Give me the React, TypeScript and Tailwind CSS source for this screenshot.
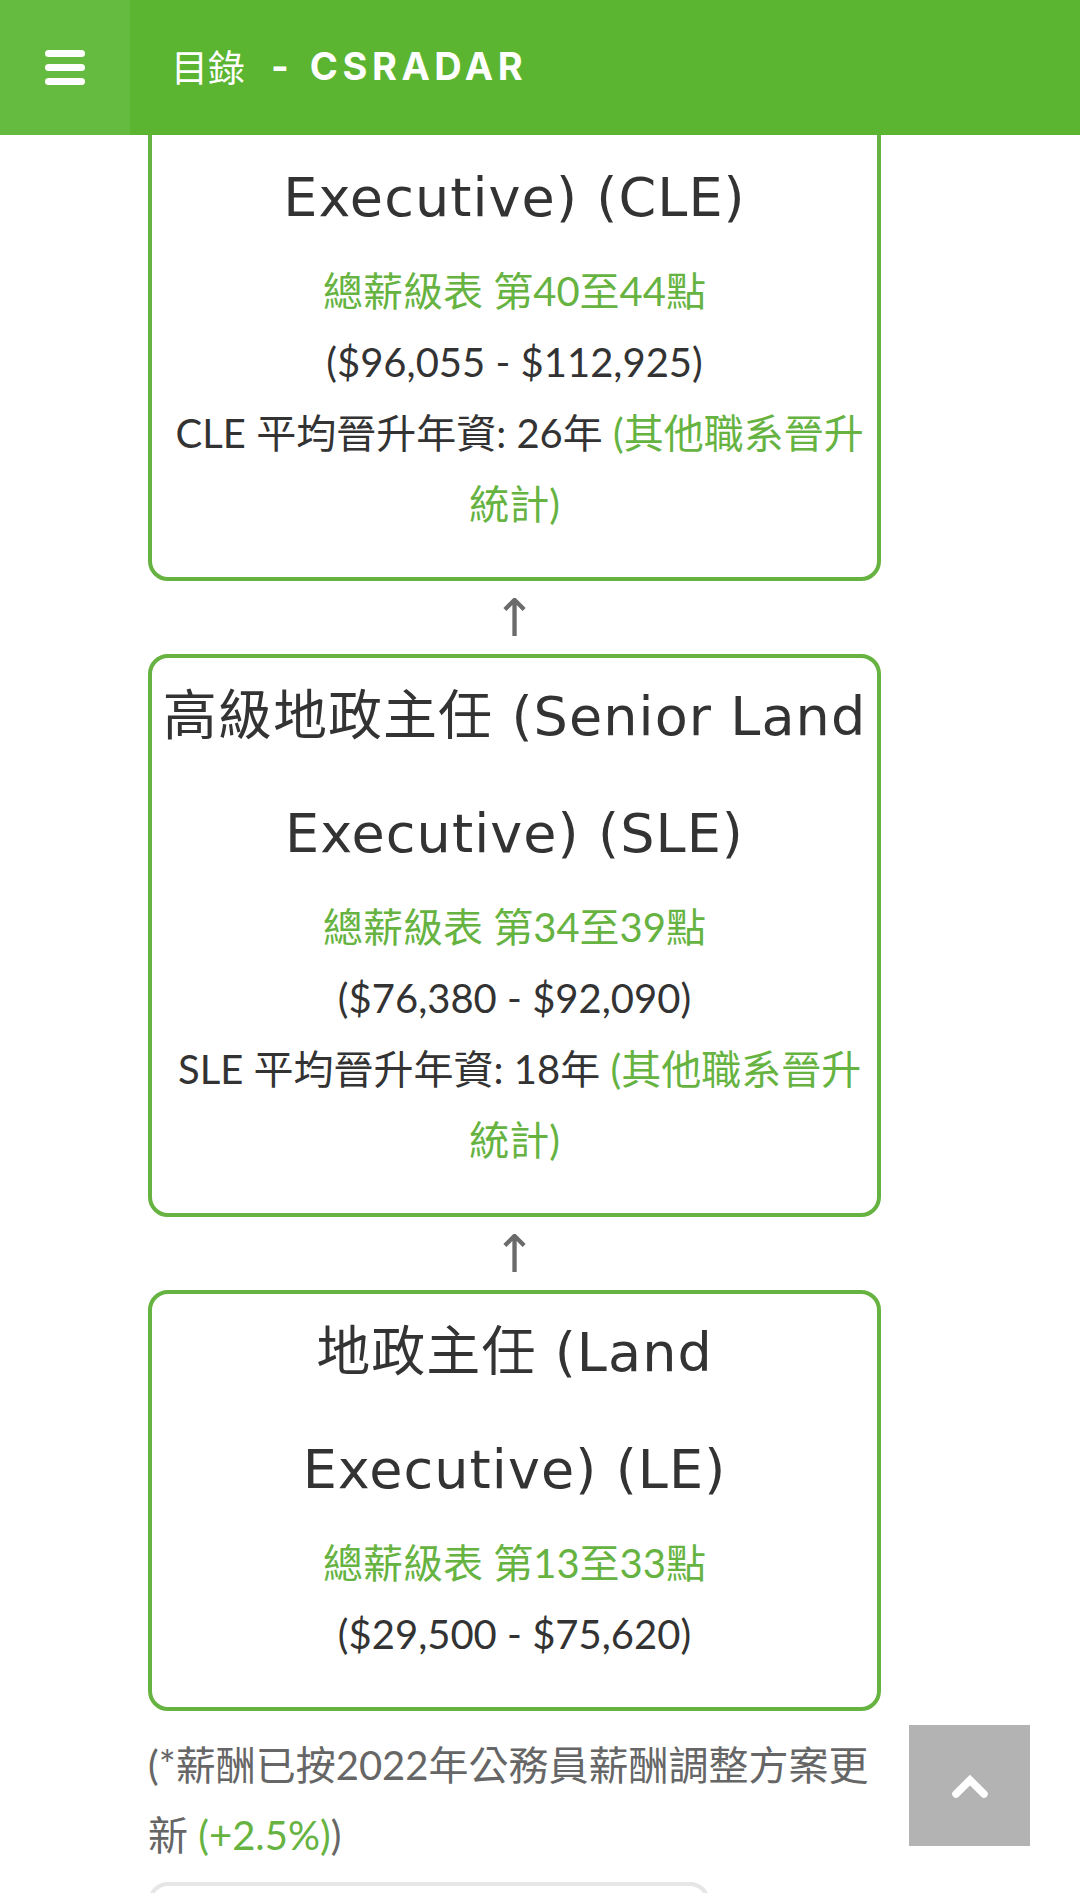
import React from 'react'

const BODY = "font-['Lato','Noto_Sans_CJK_TC',sans-serif]"
const TITLE = "font-['DejaVu_Sans','Noto_Sans_CJK_TC',sans-serif]"

type Rank = {
  title: [string, string]
  code?: string
  points: string
  salary: string
  years?: string
  hideFirstLine?: boolean
}

const RANKS: Rank[] = [
  {
    title: ['總地政主任 (Chief Land', 'Executive) (CLE)'],
    code: 'CLE',
    points: '總薪級表 第40至44點',
    salary: '($96,055 - $112,925)',
    years: '26年',
    hideFirstLine: true,
  },
  {
    title: ['高級地政主任 (Senior Land', 'Executive) (SLE)'],
    code: 'SLE',
    points: '總薪級表 第34至39點',
    salary: '($76,380 - $92,090)',
    years: '18年',
  },
  {
    title: ['地政主任 (Land', 'Executive) (LE)'],
    points: '總薪級表 第13至33點',
    salary: '($29,500 - $75,620)',
  },
]

function RankCard({ rank }: { rank: Rank }) {
  return (
    <div
      className={
        'rounded-[20px] border-[4px] border-[#66b342] bg-white px-[4px] pb-[37px] text-center ' +
        (rank.hideFirstLine ? '-mt-[117px]' : '')
      }
    >
      <h3 className={`${TITLE} whitespace-nowrap text-[54px] leading-[117px] tracking-[0.02em] text-[#333] font-normal`}>
        {rank.title[0]}
        <br />
        {rank.title[1]}
      </h3>
      <div className={`${BODY} text-[40px] leading-[71px] text-[#333]`}>
        <p className="text-[#66b342]">{rank.points}</p>
        <p>{rank.salary}</p>
        {rank.code && (
          <p>
            {'\u00a0'}
            {rank.code} 平均晉升年資: {rank.years}{' '}
            <span className="text-[#66b342]">(其他職系晉升統計)</span>
          </p>
        )}
      </div>
    </div>
  )
}

function UpArrow() {
  return (
    <div className="flex h-[73px] items-center justify-center">
      <span className="font-['DejaVu_Sans',sans-serif] text-[52px] leading-none text-[#6b6b6b]">↑</span>
    </div>
  )
}

export default function App() {
  return (
    <div className="relative h-[1893px] w-[1080px] overflow-hidden bg-white">
      {/* ── App bar ── */}
      <header className="relative z-10 flex h-[135px] items-center bg-[#5cb531]">
        <button className="flex h-full w-[130px] flex-col items-center justify-center gap-[7px] bg-[#65ba40]">
          <span className="block h-[7px] w-[40px] rounded-full bg-white" />
          <span className="block h-[7px] w-[40px] rounded-full bg-white" />
          <span className="block h-[7px] w-[40px] rounded-full bg-white" />
        </button>
        <div className="-mt-[3px] flex items-center pl-[41px] text-white">
          <span className="font-['Noto_Sans_CJK_TC',sans-serif] text-[37px] leading-none">目錄</span>
          <span className="font-['Inter',sans-serif] ml-[26px] text-[38px] font-bold leading-none">-</span>
          <span className="font-['Inter',sans-serif] ml-[21px] text-[38px] font-bold leading-none tracking-[0.12em]">
            CSRADAR
          </span>
        </div>
      </header>

      {/* ── Content ── */}
      <main className="overflow-hidden">
        <div className="ml-[148px] w-[733px]">
          {RANKS.map((rank, i) => (
            <div key={rank.code ?? rank.title[0]}>
              {i > 0 && <UpArrow />}
              <RankCard rank={rank} />
            </div>
          ))}

          <p className={`${BODY} mt-[19px] text-[40px] leading-[70px] text-[#666]`}>
            (*薪酬已按2022年公務員薪酬調整方案更新 <span className="text-[#66b342]">(+2.5%)</span>)
          </p>

          <div className="mt-[12px] h-[200px] w-[562px] rounded-[20px] border-[4px] border-[#e6e6e6]" />
        </div>
      </main>

      {/* ── Back to top ── */}
      <button className="absolute bottom-[47px] right-[50px] flex h-[121px] w-[121px] items-center justify-center bg-[#b3b3b3]">
        <svg width="44" height="30" viewBox="0 0 44 30" fill="none">
          <polyline
            points="8,23 22,9 36,23"
            stroke="white"
            strokeWidth="7.5"
            strokeLinecap="round"
            strokeLinejoin="miter"
          />
        </svg>
      </button>
    </div>
  )
}
